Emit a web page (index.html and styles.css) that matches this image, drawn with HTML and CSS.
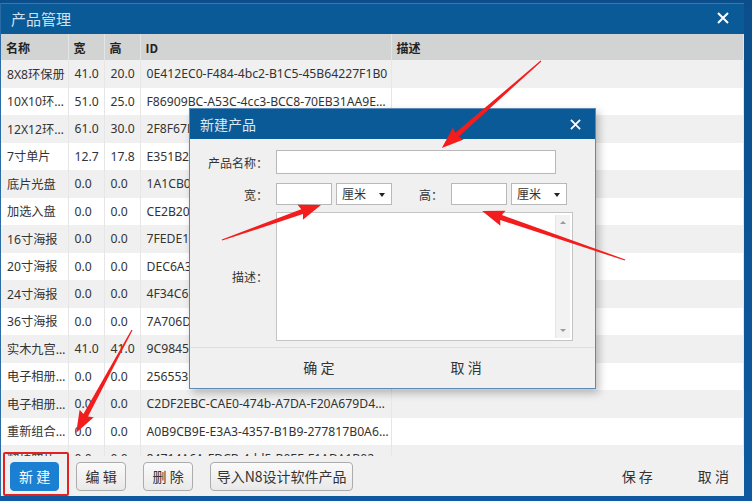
FILE: index.html
```html
<!DOCTYPE html>
<html lang="zh-CN">
<head>
    <meta charset="UTF-8">
    <meta name="viewport" content="width=device-width, initial-scale=1.0">
    <title>产品管理</title>
    <link rel="stylesheet" href="styles.css">
</head>
<body>
    <div class="window">
        <div class="titlebar">
            <span class="title">产品管理</span>
            <svg class="close" width="12" height="12" viewBox="0 0 12 12"><path d="M1 1L11 11M11 1L1 11"/></svg>
        </div>

        <div class="grid-wrap">
            <table class="grid">
                <colgroup>
                    <col style="width:67px">
                    <col style="width:36px">
                    <col style="width:36px">
                    <col style="width:251px">
                    <col>
                </colgroup>
                <thead>
                    <tr><th>名称</th><th>宽</th><th>高</th><th>ID</th><th>描述</th></tr>
                </thead>
                <tbody>
                    <tr><td>8X8环保册</td><td>41.0</td><td>20.0</td><td>0E412EC0-F484-4bc2-B1C5-45B64227F1B0</td><td></td></tr>
                    <tr><td>10X10环保册</td><td>51.0</td><td>25.0</td><td>F86909BC-A53C-4cc3-BCC8-70EB31AA9E42</td><td></td></tr>
                    <tr><td>12X12环保册</td><td>61.0</td><td>30.0</td><td>2F8F67D1-9A0B-4e21-8C3D-5E7F10A2B4C6</td><td></td></tr>
                    <tr><td>7寸单片</td><td>12.7</td><td>17.8</td><td>E351B2A4-77C1-4d0e-9F12-3B6A8C0D1E25</td><td></td></tr>
                    <tr><td>底片光盘</td><td>0.0</td><td>0.0</td><td>1A1CB0F3-2D4E-4a5b-8C6D-7E8F9A0B1C2D</td><td></td></tr>
                    <tr><td>加选入盘</td><td>0.0</td><td>0.0</td><td>CE2B20A7-5B6C-4d7e-9F80-A1B2C3D4E5F6</td><td></td></tr>
                    <tr><td>16寸海报</td><td>0.0</td><td>0.0</td><td>7FEDE1C9-8A7B-4c6d-B5E4-F3A2B1C0D9E8</td><td></td></tr>
                    <tr><td>20寸海报</td><td>0.0</td><td>0.0</td><td>DEC6A3B2-1C0D-4e9f-A8B7-C6D5E4F3A2B1</td><td></td></tr>
                    <tr><td>24寸海报</td><td>0.0</td><td>0.0</td><td>4F34C6D8-E9FA-4b0c-9D1E-2F3A4B5C6D7E</td><td></td></tr>
                    <tr><td>36寸海报</td><td>0.0</td><td>0.0</td><td>7A706D5E-4F3A-4b2c-8D1E-0F9A8B7C6D5E</td><td></td></tr>
                    <tr><td>实木九宫格</td><td>41.0</td><td>41.0</td><td>9C9845E1-D2C3-4b4a-A596-8776E5F4D3C2</td><td></td></tr>
                    <tr><td>电子相册封面</td><td>0.0</td><td>0.0</td><td>25655310-B2A3-4c4d-95E6-F7A8B9C0D1E2</td><td></td></tr>
                    <tr><td>电子相册内页</td><td>0.0</td><td>0.0</td><td>C2DF2EBC-CAE0-474b-A7DA-F20A679D4C18</td><td></td></tr>
                    <tr><td>重新组合相册</td><td>0.0</td><td>0.0</td><td>A0B9CB9E-E3A3-4357-B1B9-277817B0A6D3</td><td></td></tr>
                    <tr><td>翻拍照片</td><td>0.0</td><td>0.0</td><td>84714A6A-FDCB-4dd5-B0EE-F1ADA1B02C57</td><td></td></tr>
                </tbody>
            </table>
        </div>

        <div class="toolbar">
            <button class="btn primary">新 建</button>
            <button class="btn">编 辑</button>
            <button class="btn">删 除</button>
            <button class="btn wide">导入N8设计软件产品</button>
            <span class="spacer"></span>
            <button class="flat-btn">保 存</button>
            <button class="flat-btn">取 消</button>
        </div>
    </div>

    <!-- 新建产品 dialog -->
    <div class="dialog">
        <div class="dialog-title">
            <span class="title">新建产品</span>
            <svg class="close" width="11" height="11" viewBox="0 0 12 12"><path d="M1 1L11 11M11 1L1 11"/></svg>
        </div>
        <div class="dialog-body">
            <div class="form-row">
                <label class="label">产品名称：</label>
                <div class="input name-input"></div>
            </div>
            <div class="form-row">
                <label class="label">宽：</label>
                <div class="input size-input"></div>
                <div class="select">厘米<span class="caret"></span></div>
                <label class="label short">高：</label>
                <div class="input size-input"></div>
                <div class="select">厘米<span class="caret"></span></div>
            </div>
            <div class="form-row desc-row">
                <label class="label">描述：</label>
                <div class="textarea">
                    <div class="scrollbar">
                        <span class="arrow up"></span>
                        <span class="arrow down"></span>
                    </div>
                </div>
            </div>
        </div>
        <div class="dialog-footer">
            <button class="flat-btn">确 定</button>
            <button class="flat-btn">取 消</button>
        </div>
    </div>

    <!-- annotations -->
    <div class="mark"></div>
    <svg class="arrows" width="752" height="501" viewBox="0 0 752 501">
        <g transform="translate(541,61) rotate(138.7)"><polygon points="0,-0.6 112,-2.6 110,-8 132,0 110,8 112,2.6 0,0.6"/></g>
        <g transform="translate(222,240) rotate(-19.5)"><polygon points="0,-0.6 85,-2.6 83,-8 105,0 83,8 85,2.6 0,0.6"/></g>
        <g transform="translate(625,260) rotate(-161.1)"><polygon points="0,-0.6 131,-2.6 129,-8 151,0 129,8 131,2.6 0,0.6"/></g>
        <g transform="translate(132,330) rotate(118.5)"><polygon points="0,-0.6 97,-2.6 95,-8 117,0 95,8 97,2.6 0,0.6"/></g>
    </svg>
</body>
</html>
```

FILE: styles.css
```css
body {
    margin: 0;
    width: 752px;
    height: 501px;
    overflow: hidden;
    position: relative;
    background: linear-gradient(#0b4e8b, #0e5aa0);
    font-family: "Noto Sans CJK SC", "Noto Sans", sans-serif;
    color: #333;
}
.window {
    margin-top: 3px;
    width: 743px;
    height: 493px;
    border-left: 1px solid #2b6ba6;
    background-color: #f0f0f0;
    display: flex;
    flex-direction: column;
    overflow: hidden;
}
.titlebar {
    height: 31px;
    flex-shrink: 0;
    background-color: #0a5a97;
    border-top: 1px solid #3a77ad;
    box-sizing: border-box;
    display: flex;
    align-items: center;
    justify-content: space-between;
    padding: 0 15px 2px 10px;
}
.titlebar .title {
    color: #cfe2f3;
    font-size: 15px;
}
.close path {
    stroke: #fff;
    stroke-width: 2;
    fill: none;
}
.grid-wrap {
    flex: 1;
    overflow: hidden;
    background-color: #fff;
}
.grid {
    width: 100%;
    table-layout: fixed;
    border-collapse: collapse;
}
.grid th {
    height: 26px;
    padding: 0 5px;
    background-color: #d2d3d3;
    border-right: 1px solid #e4e4e4;
    text-align: left;
    font-size: 12px;
    font-weight: bold;
    color: #222;
}
.grid td {
    height: 27.5px;
    padding: 0 1px 0 6px;
    border-right: 1px solid #e6e6e6;
    font-family: "Noto Sans", "Noto Sans CJK SC", sans-serif;
    font-size: 12.2px;
    color: #333;
    white-space: nowrap;
    overflow: hidden;
    text-overflow: ellipsis;
}
.grid tbody tr:nth-child(odd) td {
    background-color: #f0f0f0;
}
.toolbar {
    height: 40px;
    flex-shrink: 0;
    display: flex;
    align-items: center;
    gap: 17px;
    padding: 0 15px 0 9px;
    background-color: #f0f0f0;
}
.spacer {
    flex: 1;
}
.btn {
    height: 29px;
    min-width: 50px;
    padding: 0 8px;
    font-family: inherit;
    font-size: 14px;
    color: #333;
    white-space: nowrap;
    background: linear-gradient(#fafafa, #e9e9e9);
    border: 1px solid #acacac;
    border-radius: 4px;
}
.btn.primary {
    min-width: 48px;
    background: #1b80d2;
    border-color: #1b80d2;
    color: #fff;
}
.btn.wide {
    width: 143px;
    padding: 0;
}
.flat-btn {
    background: none;
    border: none;
    padding: 0;
    margin-left: 28px;
    font-family: inherit;
    font-size: 14px;
    color: #333;
}

/* dialog */
.dialog {
    position: absolute;
    left: 189px;
    top: 108px;
    width: 407px;
    height: 281px;
    background-color: #f0f0f0;
    border: 1px solid #5a8ab5;
    box-sizing: border-box;
    box-shadow: 3px 4px 8px rgba(0, 0, 0, 0.25);
    display: flex;
    flex-direction: column;
}
.dialog-title {
    height: 30px;
    flex-shrink: 0;
    background-color: #0a5a97;
    display: flex;
    align-items: center;
    justify-content: space-between;
    padding: 0 14px 0 10px;
}
.dialog-title .title {
    color: #dbe9f5;
    font-size: 14px;
}
.dialog-body {
    flex: 1;
    padding: 11px 0 0;
    display: flex;
    flex-direction: column;
    gap: 9px;
    border-bottom: 1px solid #dedede;
}
.form-row {
    display: flex;
    align-items: center;
}
.label {
    width: 86px;
    padding-right: 8px;
    box-sizing: border-box;
    text-align: right;
    font-size: 12px;
    color: #333;
    flex-shrink: 0;
}
.label.short {
    width: 59px;
}
.input {
    height: 22px;
    background-color: #fff;
    border: 1px solid #b8b8b8;
    box-sizing: border-box;
}
.name-input {
    width: 280px;
    height: 24px;
}
.size-input {
    width: 56px;
}
.select {
    width: 56px;
    height: 22px;
    margin-left: 4px;
    box-sizing: border-box;
    background-color: #fff;
    border: 1px solid #b8b8b8;
    padding-left: 5px;
    font-size: 12px;
    line-height: 20px;
    position: relative;
}
.caret {
    position: absolute;
    right: 6px;
    top: 9px;
    border-left: 3px solid transparent;
    border-right: 3px solid transparent;
    border-top: 4px solid #222;
}
.desc-row {
    align-items: center;
    margin-top: -2px;
}
.textarea {
    width: 297px;
    height: 129px;
    background-color: #fff;
    border: 1px solid #c4c4c4;
    box-sizing: border-box;
    display: flex;
    justify-content: flex-end;
}
.scrollbar {
    width: 14px;
    margin: 2px 2px 2px 0;
    background-color: #f2f2f2;
    border-left: 1px solid #e6e6e6;
    display: flex;
    flex-direction: column;
    justify-content: space-between;
    align-items: center;
    padding: 6px 0;
}
.arrow {
    border-left: 3px solid transparent;
    border-right: 3px solid transparent;
}
.arrow.up {
    border-bottom: 3px solid #9a9a9a;
}
.arrow.down {
    border-top: 3px solid #9a9a9a;
}
.dialog-footer {
    height: 38px;
    flex-shrink: 0;
    display: flex;
    align-items: center;
    justify-content: center;
    gap: 116px;
    padding-bottom: 2px;
}
.dialog-footer .flat-btn {
    margin-left: 0;
}

/* annotations */
.mark {
    position: absolute;
    left: 3px;
    top: 452px;
    width: 62px;
    height: 40px;
    border: 2px solid #e42020;
    border-radius: 2px;
}
.arrows {
    position: absolute;
    left: 0;
    top: 0;
    pointer-events: none;
}
.arrows polygon {
    fill: #f41d1d;
}
```
